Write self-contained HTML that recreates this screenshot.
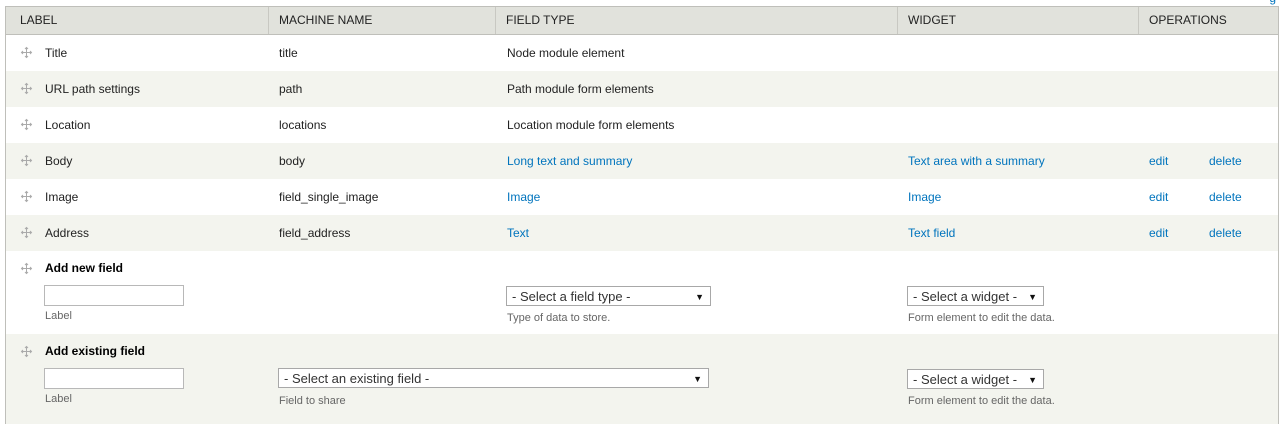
<!DOCTYPE html>
<html><head><style>
body{margin:0;width:1284px;height:412px;overflow:hidden;background:#fff;font-family:"Liberation Sans",sans-serif;font-size:12px;color:#222;position:relative}
.t{position:absolute;left:5px;top:6px;width:1272px;border-left:1px solid #bfbfba;border-right:1px solid #bfbfba}
.h{height:27px;background:#e1e2dc;border-top:1px solid #bfbfba;border-bottom:1px solid #bfbfba;position:relative}
.r{height:36px;position:relative}
.g{background:#f3f4ee}
.c{position:absolute;top:50%;transform:translateY(-50%);white-space:nowrap}
.h .c{top:13px}
.sep{position:absolute;top:0;bottom:0;width:1px;background:#c8c8c2}
a{color:#0074bd;text-decoration:none}
.drag{position:absolute;left:14px;width:13px;height:13px}
.in{position:absolute;border:1px solid #b8b8b8;background:#fff;height:19px}
.sel{position:absolute;border:1px solid #a8a8a8;background:#fff;height:20px;font-size:13px;color:#333;line-height:20px;padding-left:5px;box-sizing:border-box}
.sel:after{content:"▼";position:absolute;right:6px;top:0;font-size:9px;color:#111}
.d{position:absolute;font-size:11px;color:#666}
b{font-weight:bold;color:#000}
</style></head><body>
<div style="position:absolute;right:8px;top:-9px;color:#0074bd;font-size:12px">g</div>
<svg width="0" height="0" style="position:absolute"><defs><g id="dg" stroke="#aaa" stroke-width="1" fill="none"><path d="M6.5 1.5V11.5M1.5 6.5H11.5"/><path d="M5 3L6.5 1.5L8 3M5 10L6.5 11.5L8 10M3 5L1.5 6.5L3 8M10 5L11.5 6.5L10 8"/></g></defs></svg>
<div class="t">
<div class="h">
<span class="c" style="left:14px">LABEL</span>
<div class="sep" style="left:262px"></div><span class="c" style="left:273px">MACHINE NAME</span>
<div class="sep" style="left:489px"></div><span class="c" style="left:500px">FIELD TYPE</span>
<div class="sep" style="left:891px"></div><span class="c" style="left:902px">WIDGET</span>
<div class="sep" style="left:1132px"></div><span class="c" style="left:1143px">OPERATIONS</span>
</div>
<div class="r"><svg class="drag" style="top:11px"><use href="#dg"/></svg><span class="c" style="left:39px">Title</span><span class="c" style="left:273px">title</span><span class="c" style="left:501px">Node module element</span></div>
<div class="r g"><svg class="drag" style="top:11px"><use href="#dg"/></svg><span class="c" style="left:39px">URL path settings</span><span class="c" style="left:273px">path</span><span class="c" style="left:501px">Path module form elements</span></div>
<div class="r"><svg class="drag" style="top:11px"><use href="#dg"/></svg><span class="c" style="left:39px">Location</span><span class="c" style="left:273px">locations</span><span class="c" style="left:501px">Location module form elements</span></div>
<div class="r g"><svg class="drag" style="top:11px"><use href="#dg"/></svg><span class="c" style="left:39px">Body</span><span class="c" style="left:273px">body</span><a class="c" style="left:501px">Long text and summary</a><a class="c" style="left:902px">Text area with a summary</a><a class="c" style="left:1143px">edit</a><a class="c" style="left:1203px">delete</a></div>
<div class="r"><svg class="drag" style="top:11px"><use href="#dg"/></svg><span class="c" style="left:39px">Image</span><span class="c" style="left:273px">field_single_image</span><a class="c" style="left:501px">Image</a><a class="c" style="left:902px">Image</a><a class="c" style="left:1143px">edit</a><a class="c" style="left:1203px">delete</a></div>
<div class="r g"><svg class="drag" style="top:11px"><use href="#dg"/></svg><span class="c" style="left:39px">Address</span><span class="c" style="left:273px">field_address</span><a class="c" style="left:501px">Text</a><a class="c" style="left:902px">Text field</a><a class="c" style="left:1143px">edit</a><a class="c" style="left:1203px">delete</a></div>
<div class="r" style="height:83px"><svg class="drag" style="top:11px"><use href="#dg"/></svg><b class="c" style="left:39px;top:17px">Add new field</b>
<div class="in" style="left:38px;top:34px;width:138px"></div><span class="d" style="left:39px;top:59px">Label</span>
<div class="sel" style="left:500px;top:35px;width:205px">- Select a field type -</div><span class="d" style="left:501px;top:61px">Type of data to store.</span>
<div class="sel" style="left:901px;top:35px;width:137px">- Select a widget -</div><span class="d" style="left:902px;top:61px">Form element to edit the data.</span>
</div>
<div class="r g" style="height:90px"><svg class="drag" style="top:11px"><use href="#dg"/></svg><b class="c" style="left:39px;top:17px">Add existing field</b>
<div class="in" style="left:38px;top:34px;width:138px"></div><span class="d" style="left:39px;top:59px">Label</span>
<div class="sel" style="left:272px;top:34px;width:431px">- Select an existing field -</div><span class="d" style="left:273px;top:61px">Field to share</span>
<div class="sel" style="left:901px;top:35px;width:137px">- Select a widget -</div><span class="d" style="left:902px;top:61px">Form element to edit the data.</span>
</div>
</div>
</body></html>
